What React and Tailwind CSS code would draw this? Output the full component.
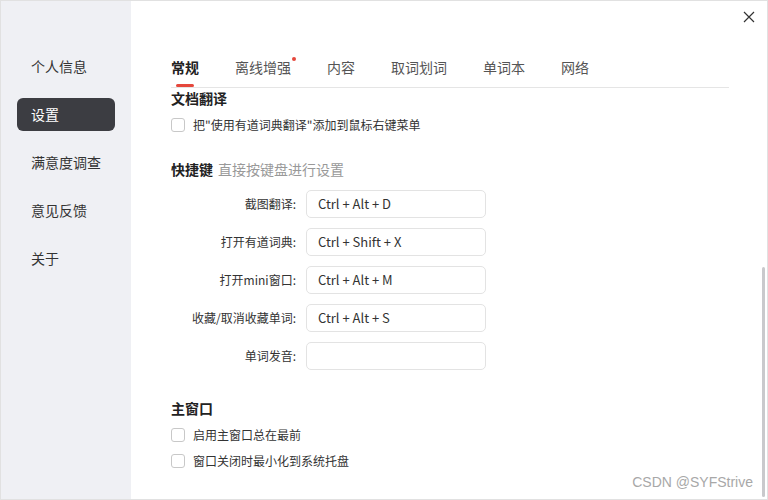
import React from "react";

const font = { fontFamily: '"Microsoft YaHei", "Noto Sans CJK SC", "Noto Sans", sans-serif' };

function Checkbox() {
  return <span className="w-[14px] h-[14px] border border-[#c8c8c8] rounded-[3px] bg-white shrink-0" />;
}

function CheckRow({ label }) {
  return (
    <div className="flex items-center h-[26px]">
      <Checkbox />
      <span className="ml-[8px] text-[12px] text-[#333]">{label}</span>
    </div>
  );
}

function KeyRow({ label, value }) {
  return (
    <div className="flex items-center h-[38px]">
      <div className="w-[135px] text-right text-[12px] text-[#333] pr-[10px]">{label}:</div>
      <div className="w-[180px] h-[28px] border border-[#e3e3e3] rounded-[5px] flex items-center pl-[11px] text-[13px] text-[#333]">
        {value}
      </div>
    </div>
  );
}

export default function App() {
  const nav = ["个人信息", "设置", "满意度调查", "意见反馈", "关于"];
  const tabs = ["常规", "离线增强", "内容", "取词划词", "单词本", "网络"];
  return (
    <div style={font} className="w-[768px] h-[500px] flex border border-[#e1e1e1] bg-white overflow-hidden relative">
      <div className="w-[130px] bg-[#eff0f4] flex flex-col pt-[49px] pl-[16px] shrink-0">
        {nav.map((n) => (
          <div
            key={n}
            className={
              "w-[98px] h-[33px] mb-[15px] rounded-[6px] flex items-center pl-[14px] text-[14px] " +
              (n === "设置" ? "bg-[#3c3d42] text-white" : "text-[#333]")
            }
          >
            {n}
          </div>
        ))}
      </div>
      <div className="flex-1 flex flex-col pl-[40px] relative">
        <svg className="absolute right-[12px] top-[10px]" width="12" height="12" viewBox="0 0 12 12">
          <path d="M1 1L11 11M11 1L1 11" stroke="#333" strokeWidth="1.2" />
        </svg>
        <div className="w-[558px] mt-[55px] border-b border-[#e5e5e5] flex gap-[36px] h-[32px]">
          {tabs.map((t) => (
            <div key={t} className="relative flex flex-col items-center">
              <span className={"text-[14px] leading-[23px] " + (t === "常规" ? "font-bold text-[#222]" : "text-[#555]")}>{t}</span>
              {t === "常规" && <span className="absolute top-[28px] w-[18px] h-[3px] rounded-full bg-[#e5473c]" />}
              {t === "离线增强" && <span className="absolute -right-[5px] top-[1px] w-[4px] h-[4px] rounded-full bg-[#e5473c]" />}
            </div>
          ))}
        </div>
        <div className="text-[14px] font-bold text-[#222] mt-0 leading-[20px]">文档翻译</div>
        <div className="mt-[4px]">
          <CheckRow label={'把"使用有道词典翻译"添加到鼠标右键菜单'} />
        </div>
        <div className="mt-[21px] flex items-center text-[14px] leading-[20px]">
          <span className="font-bold text-[#222]">快捷键</span>
          <span className="ml-[5px] text-[#999]">直接按键盘进行设置</span>
        </div>
        <div className="mt-[6px] flex flex-col">
          <KeyRow label="截图翻译" value="Ctrl + Alt + D" />
          <KeyRow label="打开有道词典" value="Ctrl + Shift + X" />
          <KeyRow label="打开mini窗口" value="Ctrl + Alt + M" />
          <KeyRow label="收藏/取消收藏单词" value="Ctrl + Alt + S" />
          <KeyRow label="单词发音" value="" />
        </div>
        <div className="mt-[23px] text-[14px] font-bold text-[#222] leading-[20px]">主窗口</div>
        <div className="mt-[4px] flex flex-col">
          <CheckRow label="启用主窗口总在最前" />
          <CheckRow label="窗口关闭时最小化到系统托盘" />
        </div>
        <div className="absolute right-[2px] top-[266px] w-[3px] h-[230px] rounded-full bg-[#c9c9cc]" />
        <div className="absolute right-[14px] bottom-[6px] text-[14px] text-[#a8a8a8]" style={{ fontFamily: '"Liberation Sans", Arial, sans-serif' }}>
          CSDN @SYFStrive
        </div>
      </div>
    </div>
  );
}
